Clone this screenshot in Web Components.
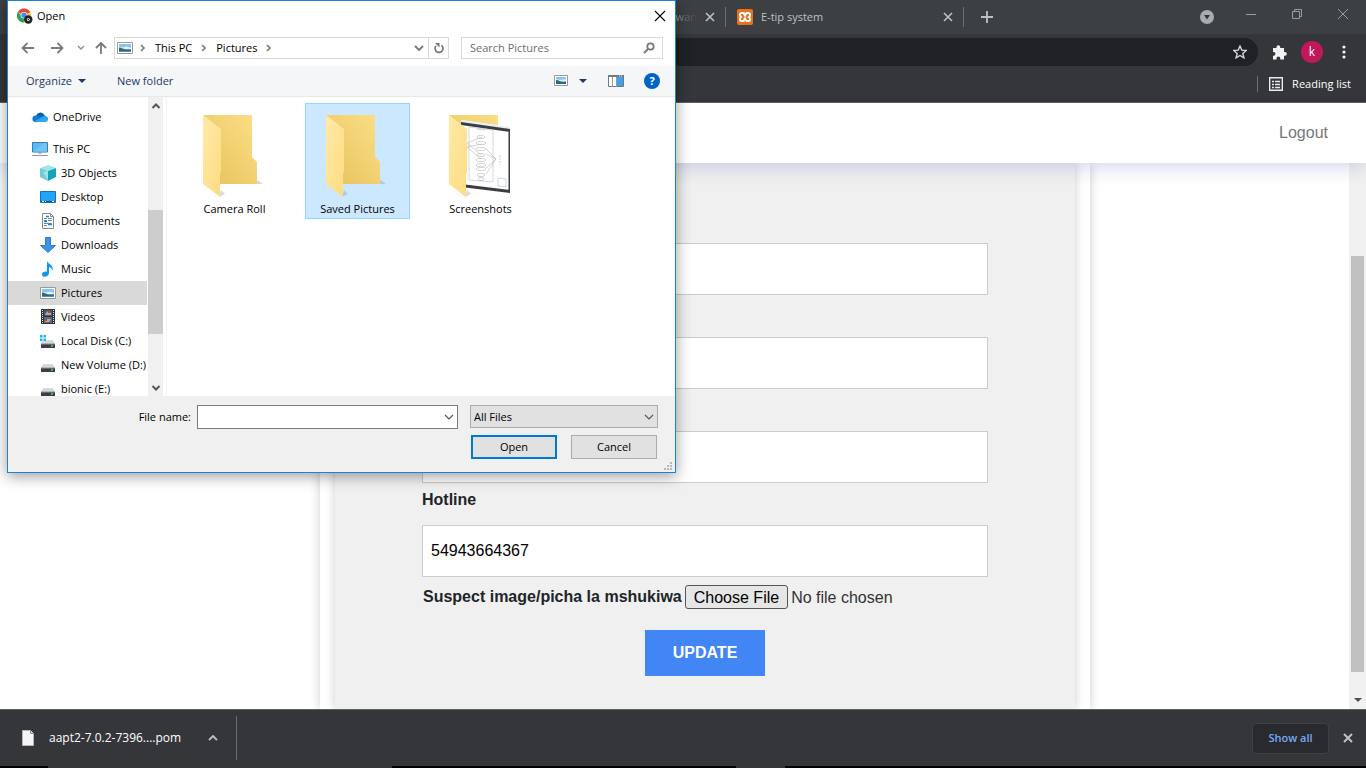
<!DOCTYPE html>
<html lang="en">
<head>
<meta charset="utf-8">
<title>E-tip system</title>
<style>
  html, body { height: 100%; margin: 0; }
  body { overflow: hidden; background: #fff; font: 11px/16px "Open Sans", "Noto Sans", sans-serif; color: #000; }
</style>
</head>
<body>
<browser-window>
  <tab-strip slot="tabs">
    <browser-tab></browser-tab>
    <browser-tab></browser-tab>
    <browser-tab faded>wan</browser-tab>
    <browser-tab favicon="xampp">E-tip system</browser-tab>
  </tab-strip>
  <browser-toolbar slot="toolbar"></browser-toolbar>
  <bookmarks-bar slot="bookmarks">Reading list</bookmarks-bar>
  <site-page>
    <a slot="nav" href="#logout">Logout</a>
    <tip-form></tip-form>
  </site-page>
  <download-shelf slot="shelf">aapt2-7.0.2-7396....pom</download-shelf>
</browser-window>

<file-dialog heading="Open">
  <tree-item slot="tree" icon="onedrive" top>OneDrive</tree-item>
  <tree-item slot="tree" icon="pc" top>This PC</tree-item>
  <tree-item slot="tree" icon="objects">3D Objects</tree-item>
  <tree-item slot="tree" icon="desktop">Desktop</tree-item>
  <tree-item slot="tree" icon="documents">Documents</tree-item>
  <tree-item slot="tree" icon="downloads">Downloads</tree-item>
  <tree-item slot="tree" icon="music">Music</tree-item>
  <tree-item slot="tree" icon="picture" selected>Pictures</tree-item>
  <tree-item slot="tree" icon="videos">Videos</tree-item>
  <tree-item slot="tree" icon="diskc">Local Disk (C:)</tree-item>
  <tree-item slot="tree" icon="disk">New Volume (D:)</tree-item>
  <tree-item slot="tree" icon="disk">bionic (E:)</tree-item>
  <folder-tile slot="files">Camera Roll</folder-tile>
  <folder-tile slot="files" selected>Saved Pictures</folder-tile>
  <folder-tile slot="files" preview>Screenshots</folder-tile>
</file-dialog>

<script>
const svg = (w, h, body) => `<svg width="${w}" height="${h}" viewBox="0 0 ${w} ${h}" fill="none" aria-hidden="true">${body}</svg>`;
const drive = `<path d="M3 7h10l2 4H1z" fill="#d5d8dc"/><path d="M1 11h14v4H1z" fill="#3b3e42"/><path d="M1 11h14" stroke="#8b8f94"/><path d="M11 13h2" stroke="#4ee04e" stroke-width="1.4"/>`;
const stroke = (c, d, w = 1) => `<path d="${d}" stroke="${c}" stroke-width="${w}"/>`;
const ICONS = {
  chrome: svg(16, 16, `<circle cx="7" cy="7.5" r="7" fill="#f7c52d"/><path d="M7 7.500 .9 4A7 7 0 0 1 13.100 4z" fill="#e04a3a"/><path d="M.9 4A7 7 0 0 0 6.500 14.500L9 10 3.500 7z" fill="#1fa463"/><circle cx="7" cy="7.200" r="3.300" fill="#fff"/><circle cx="7" cy="7.200" r="2.600" fill="#4285f4"/><circle cx="11.300" cy="11.500" r="4.200" fill="#222"/><circle cx="11.300" cy="11.500" r="1.500" fill="#eee"/><circle cx="11.300" cy="11.500" r=".7" fill="#222"/>`),
  back: svg(14, 12, stroke('#7b7b7b', 'M1.500 6H13M6.500 1 1.500 6l5 5', 1.8)),
  forward: svg(14, 12, stroke('#7b7b7b', 'M1 6h11.500M7.500 1l5 5-5 5', 1.8)),
  up: svg(12, 14, stroke('#7b7b7b', 'M6 2v11M1 7l5-5 5 5', 1.8)),
  recent: svg(8, 6, stroke('#8d8d8d', 'M1 1l3 3 3-3', 1.4)),
  crumb: svg(6, 8, stroke('#777', 'M1 1l3 3-3 3', 1.6)),
  down: svg(10, 8, stroke('#777', 'M1 2l4 4 4-4', 1.8)),
  chevron: svg(10, 8, stroke('#555', 'M1 2l4 4 4-4', 1.2)),
  scrollup: svg(10, 8, stroke('#555', 'M1.500 6 5 2.500 8.500 6', 2)),
  scrolldown: svg(10, 8, stroke('#555', 'M1.500 2 5 5.500 8.500 2', 2)),
  refresh: svg(12, 12, stroke('#777', 'M8.500 3.300A4 4 0 1 1 3 3.800', 1.7) + '<path d="M2 1h4.500v4.500z" fill="#777"/>'),
  search: svg(12, 12, '<circle cx="7.500" cy="4.500" r="3.200" stroke="#777" stroke-width="1.700"/>' + stroke('#777', 'M5 7 1 11', 2)),
  close: svg(12, 12, stroke('#000', 'M1 1l10 10M11 1 1 11', 1.1)),
  arrow: svg(8, 4, '<path d="M0 0h8L4 4z" fill="#1e3966"/>'),
  picture: svg(16, 16, '<path d="M.5 2.500h15v11H.5z" fill="#fff" stroke="#999"/><path d="M2 4h12v8H2z" fill="#8cc2f2"/><path d="M2 6.500l4 1 4-1 4 1.500v1H2z" fill="#e4f2fb"/><path d="M2 7.500c3 0 4 2 8 2h4V12H2z" fill="#2e6a73"/><path d="M2 11h12v1H2z" fill="#5691b8"/>'),
  view: svg(14, 12, '<path d="M.5.5h13v10H.5z" fill="#fff" stroke="#999"/><path d="M2 2h10v7H2z" fill="#8cc2f2"/><path d="M2 4l4 1 6-1v2H2z" fill="#e4f2fb"/><path d="M2 5c3 0 4 2 7 2h3v2H2z" fill="#2e6a73"/>'),
  pane: svg(16, 12, '<path d="M.5.5h15v11H.5z" fill="#fff" stroke="#777"/><path d="M0 0h16v2H0z" fill="#777"/><path d="M4.500 2v10M8.500 2v10" stroke="#999"/><path d="M9 2h6v9H9z" fill="#3fa0ee"/><path d="M11 1h1m1 0h1" stroke="#fff"/>'),
  onedrive: svg(16, 16, '<path d="M4 7a4.500 4.500 0 0 1 8-1.500L15 9 3 11z" fill="#0c5fb8"/><circle cx="3.800" cy="9.800" r="3.400" fill="#1379cf"/><path d="M2 12.500 11.500 7A3.200 3.200 0 0 1 16 10a2.800 2.800 0 0 1-2.700 3H3z" fill="#2aa6ec"/>'),
  pc: svg(16, 16, '<path d="M.5 1.500h15v9.500H.5z" fill="#59b9f5" stroke="#3b7faa"/><path d="M1 11 12 2h3v9z" fill="#8bd0fb" opacity=".5"/><path d="M6 12h4M0 14.500h16" stroke="#8796a3"/>'),
  objects: svg(16, 16, '<path d="M0 3l8-3 8 3-8 3z" fill="#9be7ea"/><path d="M0 3l8 3v10l-8-4z" fill="#72cad4"/><path d="M8 6l8-3v9l-8 4z" fill="#14a5b8"/><path d="M3 7l5-1v9z" fill="#c9f4f4" opacity=".6"/>'),
  desktop: svg(16, 16, '<path d="M.5 2.500h15v11H.5z" fill="#1ea5fb" stroke="#1572b8"/><path d="M1 12.500h14" stroke="#0b4774"/><path d="M2 12.500h2m1 0h1m6 0h2" stroke="#fff"/>'),
  documents: svg(16, 16, '<path d="M2.500.5h8l3 3v12h-11z" fill="#fff" stroke="#888"/><path d="M10.500.5v3h3" stroke="#888"/><path d="M4 5.500h3m-3 2h3M8 5.500h4m-4 2h4M4 10.500h8m-8 2h3" stroke="#68a"/><path d="M6 3.500h3M8 11.500h4M4 8.500h3" stroke="#1683d8" stroke-width="1.500"/>'),
  downloads: svg(16, 16, '<path d="M5.500.5h5v8h5L8 15.500.5 8.500h5z" fill="#3d94e4" stroke="#2c7bc5"/>'),
  music: svg(16, 16, '<path d="M7 0c1 3 7 4 5.500 10-.5-2.500-2-3.500-3.500-4V12c0 4.500-7 5-7 1.500C2 11 4.500 10 7 10.500z" fill="#0b98f3"/>'),
  videos: svg(16, 16, '<path d="M1 0h14v15H1z" fill="#333"/><path d="M2.500 1v13M13.500 1v13" stroke="#ddd" stroke-dasharray="1 1"/><path d="M4 1h8v6H4z" fill="#3558a5"/><path d="M4 8h8v6H4z" fill="#426cb5"/><path d="M5 5l3-3 3 2v2H6zM6 10h5l-2 3H5z" fill="#e7a829"/><path d="M8 2h2v2H8zm-3 8h2v2H5z" fill="#b4452e"/>'),
  disk: svg(16, 16, drive),
  diskc: svg(16, 16, drive + '<path d="M0 2h6v6H0z" fill="#19b4ef"/><path d="M3 2v6M0 5h6" stroke="#fff"/>'),
  xampp: svg(16, 16, '<rect width="16" height="16" rx="2" fill="#e9701c"/><path d="M4.500 4h2L8 6.500 9.500 4h2c2 0 2 3 .5 4 1.500 1 1.500 4-.5 4h-2L8 9.500 6.500 12h-2c-2 0-2-3-.5-4-1.500-1-1.500-4 .5-4z" stroke="#fff" stroke-width="2"/>'),
  tabclose: svg(10, 10, stroke('#bdc1c6', 'M1 1l8 8M9 1 1 9', 1.6)),
  plus: svg(12, 12, stroke('#bdc1c6', 'M6 0v12M0 6h12', 1.8)),
  tabsearch: svg(14, 14, '<circle cx="7" cy="7" r="7" fill="#a9acaf"/><path d="M4 5h6L7 9.500z" fill="#35363a"/>'),
  min: svg(10, 10, stroke('#9a9da0', 'M0 5.500h10')),
  restore: svg(10, 10, '<path d="M.5 2.500h7v7h-7zM2.500 2.500v-2h7v7h-2" stroke="#9a9da0"/>'),
  winclose: svg(10, 10, stroke('#9a9da0', 'M0 0l10 10M10 0 0 10')),
  star: svg(14, 14, '<path d="M7 1l1.800 4.100 4.400.4-3.400 2.900 1.100 4.400L7 10.500l-3.900 2.300 1.100-4.400L.8 5.500l4.400-.4z" stroke="#d5d7da" stroke-width="1.400"/>'),
  puzzle: svg(15, 15, '<path d="M1 3h3.500V2a1.800 1.800 0 0 1 3.700 0v1H12v4h1a1.800 1.800 0 0 1 0 3.700h-1v3.800H8.300v-1a1.900 1.900 0 0 0-3.800 0v1H1v-3.800h1A1.900 1.900 0 0 0 2 7H1z" fill="#f1f3f4"/>'),
  dots: svg(4, 14, '<g fill="#f1f3f4"><circle cx="2" cy="2" r="1.600"/><circle cx="2" cy="7" r="1.600"/><circle cx="2" cy="12" r="1.600"/></g>'),
  list: svg(14, 14, '<path d="M.7.7h12.600v12.600H.7z" stroke="#e8eaed" stroke-width="1.400"/><path d="M3 4.500h2m1 0h5M3 7.500h2m1 0h5M3 10.500h2m1 0h5" stroke="#e8eaed" stroke-width="1.500"/>'),
  file: svg(12, 16, '<path d="M.5.5h8l3 3v12H.5z" fill="#f5f5f5" stroke="#b5b5b5"/><path d="M8.500.5v3h3" fill="#ddd" stroke="#888"/>'),
  caretup: svg(10, 8, stroke('#bdc1c6', 'M1 6l4-4 4 4', 1.8)),
  shelfclose: svg(12, 12, stroke('#bdc1c6', 'M2 2l8 8M10 2 2 10', 2)),
  grip: svg(8, 8, '<path d="M6 0h2v2H6zM3 3h2v2H3zM6 3h2v2H6zM0 6h2v2H0zM3 6h2v2H3zM6 6h2v2H6z" fill="#b8b8b8"/>'),
  pagedown: svg(8, 4, '<path d="M0 0h8L4 4z" fill="#505050"/>')
};

const BASE = `:host,*{box-sizing:border-box} button{font:inherit;color:inherit;background:none;border:0;padding:0;margin:0;display:flex;align-items:center;justify-content:center} svg{display:block}`;

/* Registers an element whose shadow root is built from a style sheet and a markup function. */
function define(name, css, markup) {
  customElements.define(name, class extends HTMLElement {
    connectedCallback() {
      if (this.shadowRoot) return;
      const t = document.createElement('template');
      t.innerHTML = `<style>${BASE}${css}</style>${markup(this)}`;
      this.attachShadow({ mode: 'open' }).append(t.content.cloneNode(true));
    }
  });
}
const icon = n => `<ui-icon name="${n}"></ui-icon>`;

define('ui-icon', `:host{display:block;flex:none}`, el => ICONS[el.getAttribute('name')] || '');

/* ---------- browser ---------- */
define('browser-window', `
  :host{display:flex;flex-direction:column;height:100vh;background:#35363a}
  main{flex:1;min-height:0;display:flex;border-top:1px solid #5f6063}
  .task{height:2px;background:linear-gradient(90deg,#000 48px,#3a3637 48px 392px,#000 392px 736px,#3a3637 736px 785px,#000 785px)}`,
  () => `<slot name="tabs"></slot><slot name="toolbar"></slot><slot name="bookmarks"></slot><main><slot></slot></main><slot name="shelf"></slot><div class="task"></div>`);

define('tab-strip', `
  :host{display:flex;align-items:center;height:34px;padding:0 18px 0 12px;background:#3c4043}
  .new{width:46px}
  .win{align-self:flex-start;margin-left:auto;display:flex;align-items:center;gap:36px;height:28px}
  .win button:first-child{margin-right:-4px;padding-top:6px}`,
  () => `<slot></slot><button class="new" aria-label="New tab">${icon('plus')}</button>
  <div class="win"><button aria-label="Search tabs">${icon('tabsearch')}</button><button aria-label="Minimize">${icon('min')}</button><button aria-label="Restore">${icon('restore')}</button><button aria-label="Close window">${icon('winclose')}</button></div>`);

define('browser-tab', `
  :host{display:flex;align-items:center;gap:8px;flex:none;width:238px;height:20px;padding:0 10px 0 11px;border-right:1px solid #6d7073;color:#bdc1c6}
  .t{flex:1;overflow:hidden;white-space:nowrap}
  :host([faded]) .t{text-align:right;mask-image:linear-gradient(90deg,#000 85%,transparent)}`,
  el => `${el.hasAttribute('favicon') ? icon(el.getAttribute('favicon')) : ''}<span class="t"><slot></slot></span><button aria-label="Close tab">${icon('tabclose')}</button>`);

define('browser-toolbar', `
  :host{display:flex;align-items:center;height:36px;padding-right:20px;gap:14px}
  .omni{flex:1;height:28px;border-radius:0 14px 14px 0;background:#202124;display:flex;align-items:center;justify-content:flex-end;padding-right:11px;margin-left:100px}
  .me{width:22px;height:22px;margin-right:5px;border-radius:50%;background:#c2185b;color:#fff;font-size:12px}
  button{flex:none}`,
  () => `<div class="omni"><button aria-label="Bookmark this page">${icon('star')}</button></div>
  <button aria-label="Extensions">${icon('puzzle')}</button><button class="me">k</button><button aria-label="Menu">${icon('dots')}</button>`);

define('bookmarks-bar', `
  :host{display:flex;align-items:center;justify-content:flex-end;height:32px;padding:0 15px 4px 0;color:#fff}
  button{gap:9px;border-left:1px solid #6d7073;padding-left:11px;height:16px}`,
  () => `<button>${icon('list')}<span><slot></slot></span></button>`);

define('download-shelf', `
  :host{display:flex;align-items:center;flex:none;height:57px;border-top:1px solid #5f6063;background:#35363a;color:#fff;padding:0 12px 0 22px}
  .item{height:44px;padding-right:18px;border-right:1px solid #6d7073}
  .name{font-size:12px;margin:0 27px 0 15px}
  .all{margin-left:auto;width:77px;height:31px;border:1px solid #3f4043;border-radius:4px;background:#292a2d;color:#78a9f7;font-weight:600;margin-right:13px}`,
  () => `<button class="item">${icon('file')}<span class="name"><slot></slot></span>${icon('caretup')}</button><button class="all">Show all</button><button aria-label="Close shelf">${icon('shelfclose')}</button>`);

/* ---------- web page ---------- */
define('site-page', `
  :host{flex:1;display:flex;flex-direction:column;min-width:0;overflow:hidden;background:#fff;font:16px/24px "Liberation Sans",Arial,sans-serif;color:#212529}
  header{position:relative;z-index:1;flex:none;height:60px;display:flex;align-items:center;justify-content:flex-end;padding-right:38px;background:#fff;box-shadow:0 4px 20px rgba(40,50,140,.2)}
  ::slotted(a){color:#777;text-decoration:none}
  .view{flex:1;min-height:0;display:flex}
  .body{flex:1;min-width:0;display:flex;justify-content:center;padding-left:61px;overflow:hidden}
  .bar{width:17px;background:#f1f1f1;display:flex;flex-direction:column;align-items:center;padding:93px 0 7px}
  .thumb{width:13px;flex:0 1 416px;background:#c1c1c1;margin-bottom:auto}`,
  () => `<header><slot name="nav"></slot></header><div class="view"><div class="body"><slot></slot></div><div class="bar"><div class="thumb"></div>${icon('pagedown')}</div></div>`);

define('tip-form', `
  :host{flex:0 1 770px;display:flex;padding:0 15px;background:#fff;box-shadow:0 0 10px rgba(0,0,0,.2)}
  form{flex:1;background:#f0f0f0;box-shadow:0 0 10px rgba(0,0,0,.2);padding:38px 87px 0}
  .file{display:flex;align-items:center;gap:3px;margin:8px 0 21px;padding-left:1px;height:24px;white-space:nowrap}
  .file label{font-weight:bold}
  input{font:inherit;color:#333;width:240px;height:24px}
  input::file-selector-button{font:inherit;color:#000;height:24px;margin:0 3px 0 0;padding:0 8px;border:1px solid #555;border-radius:3px;background:#e6e6e6}
  .go{width:120px;height:46px;margin:0 auto;background:#4285f4;color:#fff;font-weight:bold}`,
  () => `<form onsubmit="return false">
    <form-field name="Name"></form-field><form-field name="Location"></form-field><form-field name="Details"></form-field>
    <form-field value="54943664367">Hotline</form-field>
    <div class="file"><label for="f">Suspect image/picha la mshukiwa</label><input id="f" type="file"></div>
    <button class="go">UPDATE</button></form>`);

define('form-field', `
  :host{display:block}
  label{display:block;height:42px;padding-top:5px;font-weight:bold}
  input{display:block;width:100%;height:52px;border:1px solid #ccc;background:#fff;padding:0 8px;font:inherit;color:#000}`,
  el => `<label for="i"><slot></slot></label><input id="i" value="${el.getAttribute('value') || ''}"${el.hasAttribute('name') ? ` aria-label="${el.getAttribute('name')}"` : ''}>`);

/* ---------- file dialog ---------- */
define('file-dialog', `
  :host{position:absolute;left:7px;top:0;z-index:5;width:669px;border:1px solid #1883d7;background:#fff;box-shadow:0 3px 14px rgba(0,0,0,.4)}
  .title{display:flex;align-items:center;height:29px;padding:0 9px;gap:4px}
  .title button{margin-left:auto}
  .nav{display:flex;align-items:center;height:36px;padding:0 12px 0 13px}
  .nav .hist{display:flex;align-items:center;width:93px;gap:15px}
  .hist button:nth-child(3){margin:0 -5px 0 -2px}
  .addr{display:flex;align-items:center;width:335px;height:22px;border:1px solid #d9d9d9;padding-left:3px;gap:9px}
  .addr .drop{margin-left:auto}
  .addr .ref{width:20px;height:20px;border-left:1px solid #d9d9d9;margin-left:-5px}
  .addr .ico{margin:0 -2px 0 -1px}
  .find{display:flex;align-items:center;flex:1;margin-left:12px;height:22px;border:1px solid #d9d9d9;padding:0 7px 0 8px}
  .find input{flex:1;min-width:0;border:0;padding:0;font:inherit;outline:0}
  .find input::placeholder{color:#6d6d6d;opacity:1}
  .cmd{display:flex;align-items:center;height:31px;background:#f5f6f7;border-bottom:1px solid #e8e8e8;color:#1e3966;padding:0 15px 0 18px}
  .cmd .org{gap:6px;margin-right:31px}
  .cmd .view{margin-left:auto;gap:11px;margin-right:21px}
  .help{width:16px;height:16px;border-radius:50%;background:#0063c6;color:#fff;font-weight:700;margin-left:20px}
  .main{display:flex;height:299px}
  .tree{width:139px;padding-top:8px;overflow:hidden}
  .bar{width:15px;margin-left:1px;background:#f0f0f0;display:flex;flex-direction:column;align-items:center;padding:5px 0 4px}
  .thumb{width:15px;height:124px;background:#cdcdcd;margin:100px 0 auto}
  .files{display:flex;align-items:flex-start;gap:18px;flex:1;margin-left:3px;padding:6px 0 0 15px;border-left:1px solid #f4f4f4}
  .foot{display:grid;grid-template-columns:183px 261px 194px;column-gap:6px;row-gap:6px;height:76px;padding-top:9px;background:#f0f0f0;align-content:start}
  .foot label{text-align:right;line-height:24px}
  .combo{display:flex;align-items:center;height:24px;border:1px solid #7a7a7a;background:#fff;padding-right:3px}
  .combo input{flex:1;min-width:0;border:0;height:20px;outline:0;font:inherit}
  .pick{position:relative;margin-left:6px}
  .pick select{appearance:none;width:100%;height:23px;border:1px solid #adadad;border-radius:0;background:#e1e1e1;padding:0 3px;font:inherit;color:#000}
  .pick ui-icon{position:absolute;right:4px;top:8px;pointer-events:none}
  .acts{grid-column:3;display:flex;gap:14px;margin-left:7px}
  .acts button{flex:none;width:86px;height:24px;border:1px solid #adadad;background:#e1e1e1}
  .acts .ok{border:2px solid #0078d7}
  .grip{position:absolute;right:3px;bottom:2px}`,
  el => `
  <div class="title">${icon('chrome')}<span>${el.getAttribute('heading')}</span><button aria-label="Close">${icon('close')}</button></div>
  <div class="nav">
    <div class="hist"><button aria-label="Back">${icon('back')}</button><button aria-label="Forward">${icon('forward')}</button><button aria-label="Recent">${icon('recent')}</button><button aria-label="Up">${icon('up')}</button></div>
    <div class="addr"><ui-icon class="ico" name="picture"></ui-icon>${icon('crumb')}<button>This PC</button>${icon('crumb')}<button>Pictures</button>${icon('crumb')}<button class="drop" aria-label="Locations">${icon('down')}</button><button class="ref" aria-label="Refresh">${icon('refresh')}</button></div>
    <div class="find"><input placeholder="Search Pictures" aria-label="Search Pictures">${icon('search')}</div>
  </div>
  <div class="cmd"><button class="org">Organize ${icon('arrow')}</button><button>New folder</button><button class="view" aria-label="View">${icon('view')}${icon('arrow')}</button><button aria-label="Preview pane">${icon('pane')}</button><button class="help">?</button></div>
  <div class="main"><nav class="tree"><slot name="tree"></slot></nav>
    <div class="bar">${icon('scrollup')}<div class="thumb"></div>${icon('scrolldown')}</div>
    <div class="files"><slot name="files"></slot></div></div>
  <div class="foot"><label for="n">File name:</label><div class="combo"><input id="n">${icon('chevron')}</div>
    <div class="pick"><select aria-label="File type"><option>All Files</option></select>${icon('chevron')}</div>
    <div class="acts"><button class="ok">Open</button><button>Cancel</button></div></div>
  <ui-icon class="grip" name="grip"></ui-icon>`);

define('tree-item', `
  :host{display:flex;align-items:center;gap:5px;height:24px;padding-left:32px;white-space:nowrap}
  :host([top]){padding-left:24px}
  :host([icon=onedrive]){margin-bottom:8px}
  :host([selected]){background:#d9d9d9}`,
  el => `${icon(el.getAttribute('icon'))}<span><slot></slot></span>`);

define('folder-tile', `
  :host{display:block;flex:none;width:105px;height:116px;border:1px solid transparent;text-align:center}
  :host([selected]){background:#cce8ff;border-color:#99d1ff}`,
  el => svg(103, 97, `
    <defs><linearGradient id="b" x1="0" y1="1" x2="1" y2="0"><stop stop-color="#e6c15a"/><stop offset="1" stop-color="#fbdf87"/></linearGradient>
    <linearGradient id="f" x1="0" y1="0" x2="1" y2="1"><stop stop-color="#ffeaa8"/><stop offset="1" stop-color="#fcdc80"/></linearGradient></defs>
    <path d="M36 93l6-3-4-4zM73 80h7l-5-4z" fill="#7b8794" opacity=".3"/>
    <path d="M20 11h49v42l5 5v22H34z" fill="url(#b)"/>
    ${el.hasAttribute('preview') ? `<path d="M32 16l49 7v66l-49-6z" fill="#fff"/><path d="M32 16l49 7v2.500l-49-7z" fill="#eceff2"/><path d="M32 18l49 7v3l-49-7zM32 80l49 6v3l-49-6zM79.500 25h1.500v63h-1.500z" fill="#3a3d42"/>
    <path d="M40 23l24 3v52l-24-2zM69 74l8 1v8l-8-1z" stroke="#b9bdc2" stroke-width=".6"/><g stroke="#b4b6ba" stroke-width=".6"><path d="M48 25l8 1M53 33 38 39l14 12M53 40l-15 3 14 12M57 45l10 10-10 9M57 50l10 5-10 15"/><ellipse cx="52" cy="33" rx="4" ry="1.600"/><ellipse cx="52" cy="39" rx="5" ry="1.600"/><ellipse cx="52" cy="45" rx="5" ry="1.600"/><ellipse cx="52" cy="51" rx="4" ry="1.600"/><ellipse cx="52" cy="56" rx="5" ry="1.600"/><ellipse cx="52" cy="61" rx="5" ry="1.600"/><ellipse cx="52" cy="65" rx="5" ry="1.600"/><ellipse cx="52" cy="71" rx="4" ry="1.600"/><ellipse cx="52" cy="75" rx="3" ry="1.600"/><path d="M71 51v10" stroke-dasharray="2 1"/></g>` : ''}
    <path d="M20 11l18 14v43l-1 2v23L20 80z" fill="url(#f)"/>`) + `<slot></slot>`);
</script>
</body>
</html>
